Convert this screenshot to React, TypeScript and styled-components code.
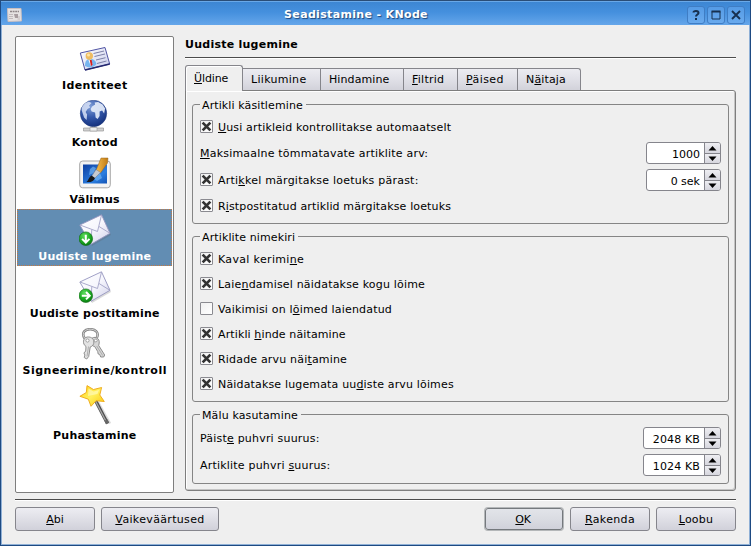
import React from 'react';
import styled, { createGlobalStyle, css } from 'styled-components';

const GlobalStyle = createGlobalStyle`
  * { box-sizing: border-box; }
  body { margin: 0; background: #efefef; }
`;

const Window = styled.div`
  display: flex;
  flex-direction: column;
  width: 751px;
  height: 546px;
  overflow: hidden;
  background: #efefef;
  border: 1px solid #1e4a82;
  border-top-color: #2a4d77;
  font: 11px/13px 'DejaVu Sans', Verdana, sans-serif;
  color: #000;
  white-space: nowrap;
`;

const TitleBar = styled.header`
  display: flex;
  align-items: center;
  flex: none;
  height: 24px;
  padding: 2px 5px 0 6px;
  border-top: 1px solid #69a8e8;
  background: linear-gradient(#3d86d3, #4590de 45%, #65a6ea);
`;

const Caption = styled.h1`
  flex: 1;
  margin: 0;
  padding-left: 3px;
  text-align: center;
  font: bold 11px/13px 'DejaVu Sans', sans-serif;
  letter-spacing: 0.34px;
  color: #fff;
  text-shadow: 1px 1px 1px #1d4478;
`;

const CaptionButtons = styled.div`
  display: flex;
  gap: 2px;
`;

const CaptionButton = styled.button`
  width: 18px;
  height: 18px;
  padding: 0;
  border: 1px solid #3f7dc4;
  border-radius: 3px;
  background: linear-gradient(#559be6, #69aaee);
  svg { display: block; }
`;

const Client = styled.main`
  flex: 1;
  padding: 11px 13px 0;
  border: 1px solid #8fb0d6;
  border-top: 0;
`;

const Columns = styled.div`
  display: grid;
  grid-template-columns: 159px 551px;
  column-gap: 11px;
  height: 463px;
`;

const PageList = styled.nav`
  height: 457px;
  padding: 1px;
  border: 1px solid #7e7e7e;
  border-radius: 2px;
  background: #fff;
`;

const PageItem = styled.div<{ $selected?: boolean; $tall?: boolean }>`
  display: flex;
  flex-direction: column;
  align-items: center;
  height: ${p => (p.$tall ? 65 : 57)}px;
  padding-top: 4px;
  border: 1px dotted transparent;
  ${p => p.$selected && css`
    color: #fff;
    background: #628db3;
    border-color: #c47a42;
  `}
  svg { flex: none; display: block; margin-bottom: 4px; }
`;

const PageLabel = styled.span<{ $ls: number }>`
  padding-left: 0.5px;
  font-weight: bold;
  letter-spacing: ${p => p.$ls}px;
`;

const Heading = styled.h2`
  margin: 0;
  height: 21px;
  padding-top: 2px;
  font: bold 11px/13px 'DejaVu Sans', sans-serif;
  letter-spacing: 0.25px;
`;

const Rule = styled.div`
  height: 2px;
  background: #4c4c4c;
  border-bottom: 1px solid #fff;
`;

const TabBar = styled.div`
  display: flex;
  align-items: flex-end;
  height: 31px;
`;

const Tab = styled.div<{ $w: number; $ls: number; $active?: boolean }>`
  width: ${p => p.$w}px;
  height: 22px;
  padding: 4px 0 0 8px;
  border: solid #85858b;
  border-width: 1px 1px 0 0;
  background: linear-gradient(#ececf1, #e0e0e7 50%, #d2d2da);
  letter-spacing: ${p => p.$ls}px;
  &:last-child { border-top-right-radius: 3px; }
  ${p => p.$active && css`
    position: relative;
    height: 26px;
    padding-top: 6px;
    margin-bottom: -1px;
    border-left-width: 1px;
    border-radius: 3px 3px 0 0;
    background: #efefef;
    box-shadow: inset 1px 1px #fff;
  `}
`;

const Pane = styled.section`
  height: 401px;
  padding: 7px 6px 0;
  border: 1px solid #7e7e7e;
  border-radius: 0 3px 3px 3px;
  box-shadow: inset 1px 1px #fff, inset -1px -1px #c4c4c4;
`;

const Group = styled.fieldset<{ $h: number; $pad: number }>`
  width: 537px;
  height: ${p => p.$h}px;
  margin: 0 0 6px;
  padding: ${p => p.$pad}px 7px 0;
  border: 1px solid #858585;
  border-radius: 3px;
`;

const Legend = styled.legend<{ $ls: number }>`
  height: 13px;
  margin: 0;
  padding: 0 3px 0 2px;
  line-height: 15px;
  letter-spacing: ${p => p.$ls}px;
`;

const Row = styled.div<{ $h: number; $mt?: number }>`
  display: flex;
  align-items: center;
  height: ${p => p.$h}px;
  margin-top: ${p => p.$mt ?? 0}px;
`;

const Label = styled.span<{ $ls: number; $drop?: number }>`
  flex: 1;
  padding-top: ${p => p.$drop ?? 1}px;
  letter-spacing: ${p => p.$ls}px;
`;

const Key = styled.u`
  text-decoration: underline 1px;
  text-underline-offset: 1px;
  text-decoration-skip-ink: none;
`;

const Box = styled.span<{ $lift?: number }>`
  width: 13px;
  height: 13px;
  margin: 0 5px ${p => p.$lift ?? 0}px 0;
  border: 1px solid #8a8a90;
  border-radius: 1px;
  background: linear-gradient(135deg, #f0f0f0, #fff);
  svg { display: block; }
`;

const SpinBox = styled.div<{ $w: number }>`
  display: flex;
  width: ${p => p.$w}px;
  height: 22px;
  border: 1px solid #85858c;
  border-radius: 3px;
  background: #fff;
  overflow: hidden;
`;

const SpinValue = styled.span<{ $ls: number }>`
  flex: 1;
  padding: 5px 4px 0 0;
  text-align: right;
  letter-spacing: ${p => p.$ls}px;
`;

const SpinButtons = styled.div`
  display: grid;
  grid-template-rows: 1fr 1fr;
  width: 16px;
  border-left: 1px solid #85858c;
`;

const SpinButton = styled.button`
  display: flex;
  align-items: center;
  justify-content: center;
  padding: 0;
  border: 0;
  background: linear-gradient(#eeeef2, #d6d6de);
  & + & { border-top: 1px solid #85858c; }
`;

const Footer = styled.footer`
  display: flex;
  gap: 6px;
  margin-top: 6px;
`;

const Spacer = styled.div`
  flex: 1;
`;

const PushButton = styled.button<{ $w: number; $ls: number; $default?: boolean }>`
  width: ${p => p.$w}px;
  height: 24px;
  padding: 0;
  border: 1px solid #85858c;
  border-radius: 3px;
  background: linear-gradient(#ededf2, #dfdfe6 50%, #d1d1da);
  font: inherit;
  letter-spacing: ${p => p.$ls}px;
  color: #000;
  ${p => p.$default && css`
    height: 22px;
    margin: 1px 1px 0;
    padding: 0 2px 0 0;
    border-color: #75797d;
    box-shadow: 0 0 0 1px #b4b7b9;
    background: linear-gradient(#e2e4e9, #dadce2 50%, #d0d1da);
  `}
`;

/* Splits "Üks &kaks" at the ampersand and underlines the accelerator letter. */
function Mnemonic({ text }: { text: string }) {
  const i = text.indexOf('&');
  if (i < 0) return <>{text}</>;
  return <>{text.slice(0, i)}<Key>{text[i + 1]}</Key>{text.slice(i + 2)}</>;
}

const Cross = () => (
  <svg width="11" height="11" viewBox="0 0 11 11">
    <path d="M2.6 2.6 8.4 8.4M8.4 2.6 2.6 8.4" stroke="#333" strokeWidth="2.7" strokeLinecap="square" />
  </svg>
);

function Check({ text, ls, checked = true, h = 13, mt = 12 }: { text: string; ls: number; checked?: boolean; h?: number; mt?: number }) {
  return (
    <Row $h={h} $mt={mt}>
      <Box>{checked && <Cross />}</Box>
      <Label $ls={ls} $drop={2}><Mnemonic text={text} /></Label>
    </Row>
  );
}

function Spin({ value, w, ls = 0 }: { value: string; w: number; ls?: number }) {
  return (
    <SpinBox $w={w}>
      <SpinValue $ls={ls}>{value}</SpinValue>
      <SpinButtons>
        <SpinButton><svg width="9" height="5"><path d="M4.500 0 8.500 4.500H.5Z" /></svg></SpinButton>
        <SpinButton><svg width="9" height="5"><path d="M.5 .5H8.500L4.500 5Z" /></svg></SpinButton>
      </SpinButtons>
    </SpinBox>
  );
}

const NewsIcon = () => (
  <svg width="15" height="14" viewBox="0 0 15 14">
    <path d="M.5.5H14L14.5 13 1 13.5Z" fill="#e6e2e2" stroke="#c9bfc0" />
    <path d="M3 3.5H12" stroke="#8f8688" strokeWidth="1.6" strokeDasharray="2 .6" />
    <path d="M2 6.500H6M2 8.500H6M2 10.500H6M10.500 9H13M10.500 11H13" stroke="#c2babc" />
    <path d="M7 6H11V10H8Z" fill="#a89da0" />
  </svg>
);

const IdentityIcon = () => (
  <svg width="32" height="32" viewBox="0 0 32 32">
    <defs><linearGradient id="card" x1="0" y1="0" x2="1" y2="1"><stop offset="0" stopColor="#fff" /><stop offset="1" stopColor="#c9cdec" /></linearGradient></defs>
    <path d="M1.300 10 26 4.500 30.700 21 6 27Z" fill="url(#card)" stroke="#5054a4" strokeLinejoin="round" />
    <path d="M30.700 21 6 27" stroke="#25296f" strokeWidth="1.500" />
    <path d="M14.500 10.500 25 8M15.500 13.500 26 11M17 17 26.500 14.700M18 20.500 27.500 18" stroke="#7c80a8" />
    <path d="M6 23C6 17.500 8 16 11.500 16S17 18 17.500 21C15 24.500 10 25.500 6 23Z" fill="#77b5f0" />
    <path d="M9.500 17 12 16.500 13.500 21 12 23.500Z" fill="#fff" /><path d="M10.700 17 12.700 17 13.500 21.500 12 23.500Z" fill="#d51f1f" />
    <circle cx="10.300" cy="13" r="3.700" fill="#eebc62" /><circle cx="9.500" cy="12" r="1.500" fill="#ffe5a6" />
  </svg>
);

const GlobeIcon = () => (
  <svg width="32" height="32" viewBox="0 0 32 32">
    <defs><radialGradient id="globe" cx=".4" cy=".25" r=".8"><stop offset="0" stopColor="#7f9ed8" /><stop offset=".5" stopColor="#3458aa" /><stop offset="1" stopColor="#122d78" /></radialGradient></defs>
    <path d="M13 26H16V28H24.500V31H4.500V28H13Z" fill="#d0d0d0" stroke="#9a9a9a" strokeWidth=".7" /><path d="M11 27.500H18V31H11Z" fill="#eee" stroke="#999" strokeWidth=".6" />
    <g transform="translate(-.9 0)">
      <circle cx="15.400" cy="13.400" r="13.200" fill="url(#globe)" stroke="#20397c" strokeWidth=".5" />
      <path d="M4 7C6 3.500 8.500 2 11 1.800L13.500 3 11 5.500 12 7.500 9.500 9 7.500 12 9 14.500 8.500 20 6 17.500 4.500 13 3.500 10Z" fill="#d8e2f7" opacity=".85" />
      <path d="M14 6.500 17 4.500 16.500 2.500 20 2 24.500 4.500 27 8.500 26 13.500 24 10.500 21.500 11.500 21.500 16 19.500 19 17.500 17.500 17 12.500 13.500 11.500 12.500 9Z" fill="#e4ebfa" opacity=".92" />
    </g>
  </svg>
);

const PaintIcon = () => (
  <svg width="32" height="32" viewBox="0 0 32 32">
    <defs>
      <linearGradient id="screen" x1="0" y1="0" x2="1" y2="1"><stop offset="0" stopColor="#0d3ea0" /><stop offset=".65" stopColor="#2b7ee0" /><stop offset="1" stopColor="#1354b6" /></linearGradient>
      <linearGradient id="brush"><stop offset="0" stopColor="#f7bd4c" /><stop offset="1" stopColor="#c07a12" /></linearGradient>
    </defs>
    <rect x=".7" y="4" width="30.600" height="26.800" rx="3" fill="#f3f3f3" stroke="#a7a7a7" />
    <rect x="4" y="7.500" width="24" height="19" fill="url(#screen)" />
    <path d="M11 12 14 9.500 17 11 14.500 16 10 18ZM15 22 21 16 23 21 18 24Z" fill="#77b8f4" opacity=".65" />
    <path d="M22 1H29L28.500 6 21.500 16 17 13.500Z" fill="url(#brush)" stroke="#98671f" strokeWidth=".5" />
    <path d="M17 12.500 21.500 15.500 15.500 21.500 12.500 19.500Z" fill="#c7cbd0" stroke="#7a7f86" strokeWidth=".5" />
    <path d="M12.500 18.500 16 21C14.500 24.500 11.500 25.500 7.500 25 9.500 23.500 9.500 20.500 12.500 18.500Z" fill="#18191c" />
  </svg>
);

const MailIcon = ({ id, down }: { id: string; down?: boolean }) => (
  <svg width="32" height="32" viewBox="0 0 32 32">
    <defs>
      <linearGradient id={id + 'e'} x1="0" y1="0" x2="1" y2="1"><stop offset="0" stopColor="#fff" /><stop offset=".5" stopColor="#f6f6fd" /><stop offset="1" stopColor="#cfcfe8" /></linearGradient>
      <radialGradient id={id + 'b'} cx=".4" cy=".3" r=".75"><stop offset="0" stopColor="#5fdc5f" /><stop offset=".55" stopColor="#1ead25" /><stop offset="1" stopColor="#08780e" /></radialGradient>
    </defs>
    <path d="M2 12.500 23 2.500 32 21 13 32Z" fill="#555" opacity=".22" />
    <path d="M.8 11 22.500.8 31 19.300 12 30.300Z" fill={`url(#${id}e)`} stroke="#9595bf" strokeWidth=".9" strokeLinejoin="round" />
    <path d="M1 11 18.500 17.500 22.500 1M12 30 12.800 15.500M31 19.300 20 12.500" fill="none" stroke="#a3a3c6" strokeWidth=".9" />
    <circle cx="6.800" cy="24.700" r="6.800" fill={`url(#${id}b)`} stroke="#0b650f" strokeWidth=".6" />
    <g transform={down ? 'rotate(90 6.800 24.700)' : undefined}><path d="M2.800 24.700H10M7 21 10.700 24.700 7 28.400" fill="none" stroke="#fff" strokeWidth="2" /></g>
  </svg>
);

const KeysIcon = () => (
  <svg width="32" height="32" viewBox="0 0 32 32">
    <g transform="translate(-.8 0)">
      <path d="M6.500 10.500C2.500 4 7.500 1.200 12 1.200S21.500 4 18.500 10" fill="none" stroke="#858585" strokeWidth="2.600" />
      <path d="M6.500 10.500C2.500 4 7.500 1.200 12 1.200S21.500 4 18.500 10" fill="none" stroke="#d4d4d4" strokeWidth="1" />
      <path d="M14 10C18 8 21.500 11 21 15L20.500 17.500 26.500 27 25.500 29 22.500 29 21.500 26.500 20 26 19.500 23.500 16.500 18.500C12.500 18 11.500 13 14 10Z" fill="#d6d6d6" stroke="#858585" strokeWidth=".9" />
      <path d="M9 9C13.500 8.500 16.500 11.500 15.500 15.500 15 17.500 13.500 18.500 12 19L10.500 28.500 8.500 31 6 29.500 6.700 27 5.700 25 7.500 23 7.800 18.500C4 16 4.500 10 9 9Z" fill="#e3e3e3" stroke="#858585" strokeWidth=".9" />
      <circle cx="9.300" cy="12.500" r="1.600" fill="#fff" stroke="#858585" strokeWidth=".7" /><circle cx="17.600" cy="12.500" r="1.400" fill="#fff" stroke="#858585" strokeWidth=".7" />
      <path d="M10.300 18.500 8.800 28.500M18.500 18 24.500 27.500" stroke="#a2a2a2" strokeWidth=".8" />
    </g>
  </svg>
);

const WandIcon = () => (
  <svg width="32" height="40" viewBox="0 0 32 40">
    <defs>
      <linearGradient id="star" x1="0" y1="0" x2="1" y2="1"><stop offset="0" stopColor="#ffd21c" /><stop offset=".5" stopColor="#fff05c" /><stop offset="1" stopColor="#fbc708" /></linearGradient>
    </defs>
    <path d="M19 17 31 38.500" stroke="#bbb" strokeWidth="2.500" opacity=".5" />
    <path d="M16 14.500 28.500 38.500" stroke="#4c4c4c" strokeWidth="3.300" />
    <path d="M15.700 14.500 28 38.300" stroke="#a5a5a5" strokeWidth="1.400" />
    <path d="M27 35 28.700 38.500" stroke="#666" strokeWidth="3.400" />
    <path d="M8 .6 14.500 4.500 22.600 2.500 20.800 10 25.300 16.500 17 15.800 12 21.300 9.300 14.200.9 11.300 7.300 7.500Z" fill="url(#star)" stroke="#eda614" strokeWidth=".9" strokeLinejoin="round" />
    <path d="M9.500 3.500 14.500 6.500 20 5 18.500 9 9 11Z" fill="#fffbc0" opacity=".65" />
  </svg>
);

const pages = [
  { label: 'Identiteet', ls: 0.39, icon: <IdentityIcon /> },
  { label: 'Kontod', ls: 0.29, icon: <GlobeIcon /> },
  { label: 'Välimus', ls: 0.22, icon: <PaintIcon /> },
  { label: 'Uudiste lugemine', ls: 0.26, icon: <MailIcon id="in" down />, selected: true },
  { label: 'Uudiste postitamine', ls: 0.22, icon: <MailIcon id="out" /> },
  { label: 'Signeerimine/kontroll', ls: 0.48, icon: <KeysIcon /> },
  { label: 'Puhastamine', ls: 0.22, icon: <WandIcon />, tall: true },
];

export default function App() {
  return (
    <>
      <GlobalStyle />
      <Window>
        <TitleBar>
          <NewsIcon />
          <Caption>Seadistamine - KNode</Caption>
          <CaptionButtons>
            <CaptionButton aria-label="Abi">
              <svg width="16" height="16" viewBox="0 0 16 16" fill="none" stroke="#17304f" strokeWidth="2"><path d="M5.500 5.500C5.500 3.500 10.500 3.500 10.500 6 10.500 7.500 8 7.500 8 9.500M8 11V13" /></svg>
            </CaptionButton>
            <CaptionButton aria-label="Maksimeeri">
              <svg width="16" height="16" viewBox="0 0 16 16"><path d="M4 4.500H12V12H4Z" fill="none" stroke="#17304f" /><path d="M3.500 4.500H12.500" stroke="#17304f" strokeWidth="2" /></svg>
            </CaptionButton>
            <CaptionButton aria-label="Sulge">
              <svg width="16" height="16" viewBox="0 0 16 16"><path d="M4 4 12 12M12 4 4 12" stroke="#17304f" strokeWidth="1.900" /></svg>
            </CaptionButton>
          </CaptionButtons>
        </TitleBar>
        <Client>
          <Columns>
            <PageList>
              {pages.map(p => (
                <PageItem key={p.label} $selected={p.selected} $tall={p.tall}>
                  {p.icon}
                  <PageLabel $ls={p.ls}>{p.label}</PageLabel>
                </PageItem>
              ))}
            </PageList>
            <div>
              <Heading>Uudiste lugemine</Heading>
              <Rule />
              <TabBar>
                <Tab $w={58} $ls={-0.1} $active><Mnemonic text="&Üldine" /></Tab>
                <Tab $w={78} $ls={0.3}>Liikumine</Tab>
                <Tab $w={83} $ls={0.09}>Hindamine</Tab>
                <Tab $w={54} $ls={0.25}><Mnemonic text="&Filtrid" /></Tab>
                <Tab $w={60} $ls={0.4}><Mnemonic text="&Päised" /></Tab>
                <Tab $w={63} $ls={0.15}><Mnemonic text="N&äitaja" /></Tab>
              </TabBar>
              <Pane>
                <Group $h={126} $pad={4}>
                  <Legend $ls={0.11}>Artikli käsitlemine</Legend>
                  <Check text="&Uusi artikleid kontrollitakse automaatselt" ls={0.16} h={23} mt={0} />
                  <Row $h={22} $mt={4}>
                    <Label $ls={0.2}><Mnemonic text="&Maksimaalne tõmmatavate artiklite arv:" /></Label>
                    <Spin value="1000" w={75} />
                  </Row>
                  <Row $h={22} $mt={5}>
                    <Box $lift={1}><Cross /></Box>
                    <Label $ls={0.23}><Mnemonic text="Arti&kkel märgitakse loetuks pärast:" /></Label>
                    <Spin value="0 sek" w={75} />
                  </Row>
                  <Check text="R&istpostitatud artiklid märgitakse loetuks" ls={0.14} h={23} mt={3} />
                </Group>
                <Group $h={172} $pad={9}>
                  <Legend $ls={0.12}>Artiklite nimekiri</Legend>
                  <Check text="Kaval kerimi&ne" ls={0.34} mt={0} />
                  <Check text="Laie&ndamisel näidatakse kogu lõime" ls={0.19} />
                  <Check text="Vaikimisi on l&õimed laiendatud" ls={0.18} checked={false} />
                  <Check text="Artikli &hinde näitamine" ls={0.12} />
                  <Check text="Ridade arvu näi&tamine" ls={0.18} />
                  <Check text="Näidatakse lugemata uu&diste arvu lõimes" ls={0.16} />
                </Group>
                <Group $h={76} $pad={6}>
                  <Legend $ls={0.13}>Mälu kasutamine</Legend>
                  <Row $h={22}>
                    <Label $ls={0.2}><Mnemonic text="Päist&e puhvri suurus:" /></Label>
                    <Spin value="2048 KB" w={78} ls={0.13} />
                  </Row>
                  <Row $h={22} $mt={5}>
                    <Label $ls={0.2}><Mnemonic text="Artiklite puhvri &suurus:" /></Label>
                    <Spin value="1024 KB" w={78} ls={0.13} />
                  </Row>
                </Group>
              </Pane>
            </div>
          </Columns>
          <Rule />
          <Footer>
            <PushButton $w={80} $ls={0}><Mnemonic text="&Abi" /></PushButton>
            <PushButton $w={118} $ls={0.34}><Mnemonic text="&Vaikeväärtused" /></PushButton>
            <Spacer />
            <PushButton $w={78} $ls={-0.3} $default><Mnemonic text="&OK" /></PushButton>
            <PushButton $w={80} $ls={0.35}><Mnemonic text="&Rakenda" /></PushButton>
            <PushButton $w={80} $ls={0.25}><Mnemonic text="&Loobu" /></PushButton>
          </Footer>
        </Client>
      </Window>
    </>
  );
}
